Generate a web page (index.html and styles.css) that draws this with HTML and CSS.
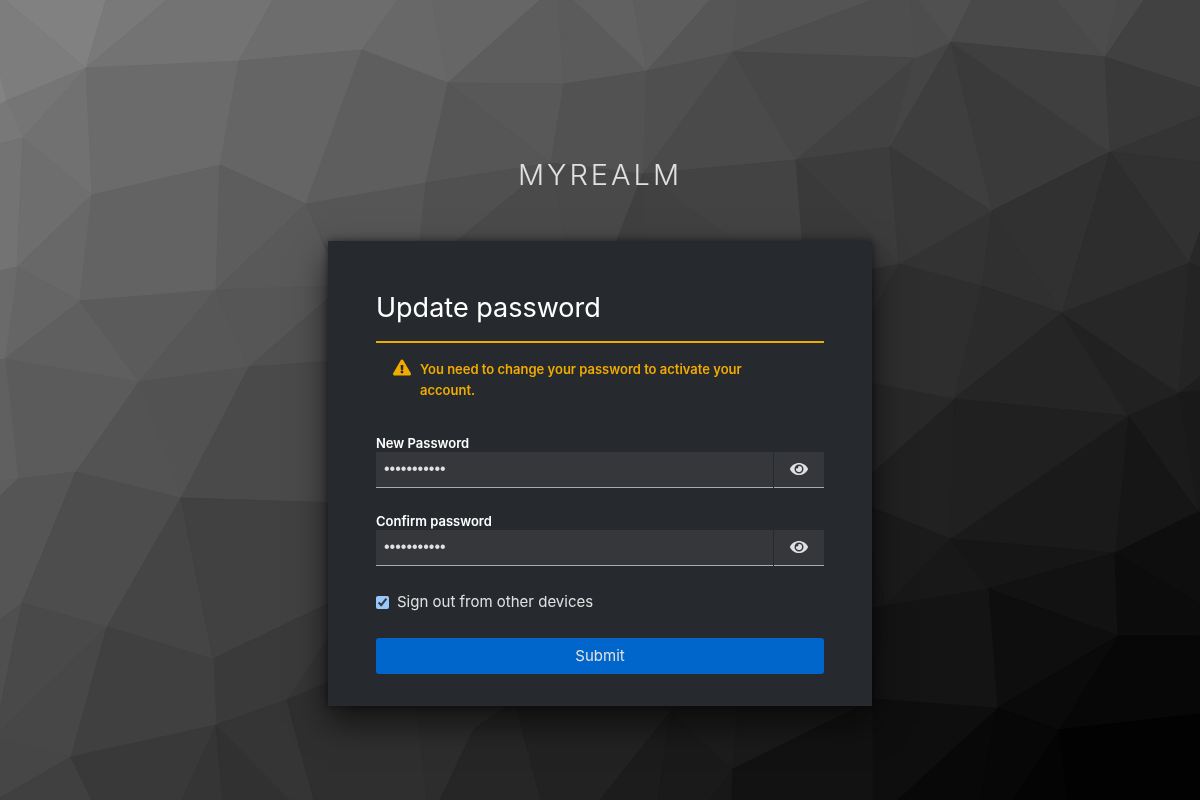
FILE: index.html
```
<!DOCTYPE html>
<html lang="en">
<head>
<meta charset="utf-8">
<meta name="viewport" content="width=device-width, initial-scale=1">
<title>Update password</title>
<link rel="stylesheet" href="styles.css">
</head>
<body>
<svg class="backdrop" viewBox="0 0 1200 800" preserveAspectRatio="xMidYMid slice" aria-hidden="true"></svg>
<div class="page">
  <header class="realm">MYREALM</header>
  <main class="card">
    <h1 class="title">Update password</h1>
    <div class="alert" role="alert">
      <svg class="alert-icon" viewBox="0 0 576 512" aria-hidden="true"><path d="M569.517 440.013C587.975 472.007 564.806 512 527.94 512H48.054c-36.937 0-59.999-40.055-41.577-71.987L246.423 23.985c18.467-32.009 64.72-31.951 83.154 0l239.94 416.028zM288 354c-25.405 0-46 20.595-46 46s20.595 46 46 46 46-20.595 46-46-20.595-46-46-46zm-43.673-165.346l7.418 136c.347 6.364 5.609 11.346 11.982 11.346h48.546c6.373 0 11.635-4.982 11.982-11.346l7.418-136c.375-6.874-5.098-12.654-11.982-12.654h-63.383c-6.884 0-12.356 5.78-11.981 12.654z"/></svg>
      <span class="alert-text">You need to change your password to activate your account.</span>
    </div>
    <form class="form">
      <div class="field">
        <label class="label" for="new">New Password</label>
        <div class="group">
          <input class="input" id="new" type="password" value="password123">
          <button class="reveal" type="button" aria-label="Show password"><svg class="eye" viewBox="0 0 576 512" aria-hidden="true"><path fill-rule="evenodd" d="M572.52 241.4C518.29 135.59 410.93 64 288 64S57.68 135.64 3.48 241.41a32.35 32.35 0 0 0 0 29.19C57.71 376.41 165.07 448 288 448s230.32-71.64 284.52-177.41a32.35 32.35 0 0 0 0-29.19zM288 400a144 144 0 1 1 144-144 143.93 143.93 0 0 1-144 144z"/><path d="M288 160a95.31 95.31 0 0 0-25.31 3.79 47.85 47.85 0 0 1-66.9 66.9A95.78 95.78 0 1 0 288 160z"/></svg></button>
        </div>
      </div>
      <div class="field">
        <label class="label" for="confirm">Confirm password</label>
        <div class="group">
          <input class="input" id="confirm" type="password" value="password123">
          <button class="reveal" type="button" aria-label="Show password"><svg class="eye" viewBox="0 0 576 512" aria-hidden="true"><path fill-rule="evenodd" d="M572.52 241.4C518.29 135.59 410.93 64 288 64S57.68 135.64 3.48 241.41a32.35 32.35 0 0 0 0 29.19C57.71 376.41 165.07 448 288 448s230.32-71.64 284.52-177.41a32.35 32.35 0 0 0 0-29.19zM288 400a144 144 0 1 1 144-144 143.93 143.93 0 0 1-144 144z"/><path d="M288 160a95.31 95.31 0 0 0-25.31 3.79 47.85 47.85 0 0 1-66.9 66.9A95.78 95.78 0 1 0 288 160z"/></svg></button>
        </div>
      </div>
      <label class="check"><input class="box" type="checkbox" checked><span>Sign out from other devices</span></label>
      <button class="submit" type="submit">Submit</button>
    </form>
  </main>
</div>
<script src="backdrop.js"></script>
</body>
</html>
```
FILE: backdrop.js
```
// Facets of the low-poly backdrop: grey level, then the corner points.
const facets = `
129 5,0 106,0 86,68
125 0,0 5,0 86,68 6,101 0,78
131 0,78 6,101 0,104
121 106,0 167,0 86,68
115 167,0 273,0 239,61 86,68
109 273,0 398,0 362,50 239,61
104 398,0 432,0 448,83 362,50
102 432,0 540,0 448,83
117 6,101 86,68 23,138
120 0,104 6,101 23,138 0,144
113 86,68 92,195 23,138
115 0,144 23,138 17,267 0,271
110 23,138 92,195 17,267
107 86,68 239,61 220,165 92,195
101 239,61 362,50 306,204 220,165
94 362,50 448,83 426,183 306,204
104 92,195 17,267 80,301
99 92,195 220,165 216,290 80,301
93 220,165 306,204 216,290
101 17,267 80,301 5,359
106 0,271 17,267 5,359 0,360
89 306,204 216,290 340,286 340,281
86 306,204 426,183 419,250 340,250 328,250
95 80,301 5,359 139,382
91 80,301 216,290 139,382
87 216,290 139,382 249,367
86 216,290 340,286 340,288 249,367
80 249,367 340,288 340,361
91 5,359 139,382 76,472 18,479
96 0,360 5,359 18,479 0,481
94 0,481 18,479 0,496
82 139,382 249,367 181,498
83 139,382 181,498 76,472
74 249,367 340,361 340,503 181,498
85 18,479 76,472 22,603 0,620 0,496
77 76,472 181,498 107,627 22,603
69 181,498 107,627 213,659
65 181,498 340,503 340,598 213,659
58 213,659 340,598 340,677 287,700 216,725
54 287,700 340,620 340,677
79 22,603 0,620 0,710
73 22,603 107,627 0,732 0,710
71 107,627 71,757 0,740 0,732
70 0,740 71,757 0,798
64 71,757 0,798 0,800 92,800
64 107,627 213,659 216,725 71,757
57 71,757 216,725 182,800 92,800
53 216,725 182,800 223,800
49 216,725 223,800 290,800
53 216,725 287,700 314,800 290,800
47 287,700 340,677 416,690 427,800 314,800
45 415,690 427,800 440,800 474,729 530,690
38 474,729 530,690 512,690 541,800 440,800
34 512,690 690,690 671,711 600,800 541,800
28 671,711 658,800 600,800
26 671,711 733,769 710,800 658,800
28 671,711 690,690 740,690 733,769
26 740,690 880,690 873,700 733,769
24 733,769 710,800 732,800
18 733,769 873,700 873,800 732,800
93 540,0 558,0 564,84 448,83
91 558,0 574,0 647,71 564,84
97 574,0 633,0 647,71
94 633,0 710,0 647,71
86 710,0 738,0 733,52 647,71
84 738,0 872,0 733,52
78 733,52 872,0 911,0 915,58
88 448,83 564,84 551,163
86 448,83 551,163 426,183
82 564,84 647,71 643,174 551,163
79 647,71 733,52 643,174
74 733,52 796,160 643,174
71 733,52 915,58 796,160
80 426,183 551,163 446,250 419,250
74 551,163 446,250 567,250
73 551,163 567,250 613,250 643,174
64 643,174 613,250 647,250
65 643,174 647,250 750,250
67 643,174 796,160 803,250 750,250
66 915,58 796,160 890,147
69 915,58 951,42 890,147
77 911,0 918,0 951,42 915,58
80 918,0 972,0 951,42
73 972,0 1057,0 1105,57 951,42
76 1057,0 1118,0 1105,57
74 1118,0 1144,0 1105,57
65 1144,0 1200,0 1200,88 1105,57
62 951,42 890,147 992,211
58 951,42 992,211 1110,152
63 951,42 1105,57 1110,152
57 1105,57 1200,88 1200,116 1110,152
52 1110,152 1200,116 1200,162
49 1110,152 1200,162 1200,232 1189,263
49 992,211 1110,152 1062,313
45 1110,152 1062,313 1189,263
51 992,211 899,264 982,286
48 992,211 982,286 1062,313
60 796,160 890,147 899,264
56 890,147 992,211 899,264
58 796,160 803,250 860,272 899,264
40 1189,263 1200,232 1200,268
50 899,264 860,272 860,335
46 899,264 860,335 860,381 954,399 982,286
43 982,286 1062,313 954,399
37 1062,313 954,399 1128,416
33 1062,313 1128,416 1179,393
39 1062,313 1189,263 1179,393
36 1189,263 1200,268 1200,377 1179,393
30 1179,393 1200,377 1200,391
25 1179,393 1200,391 1200,512 1198,512
27 1128,416 1179,393 1198,512
22 1128,416 1115,553 1198,512
26 1128,416 950,539 1115,553
32 954,399 1128,416 950,539
33 954,399 860,483 860,503 950,539
40 954,399 860,381 860,483
27 860,503 950,539 885,606
24 950,539 988,589 885,606
22 950,539 1115,553 988,589
18 988,589 1115,553 1118,636
14 1115,553 1198,512 1200,512 1200,604
12 1115,553 1200,604 1200,636 1118,636
14 988,589 1118,636 997,708
20 885,606 988,589 997,708 873,699
25 860,503 860,610 885,606
19 860,610 885,606 873,699
10 1118,636 997,708 1059,730
7 1118,636 1200,636 1200,714 1059,730
2 1059,730 1200,714 1200,800 1067,800
4 1059,730 1067,800 1012,800
7 997,708 1059,730 1012,800 980,800
8 997,708 980,800 897,800
14 873,699 997,708 897,800 873,800
`.trim().split("\n");

const svg = document.querySelector(".backdrop");
for (const facet of facets) {
  const split = facet.indexOf(" ");
  const grey = facet.slice(0, split);
  const polygon = document.createElementNS("http://www.w3.org/2000/svg", "polygon");
  polygon.setAttribute("points", facet.slice(split + 1));
  polygon.setAttribute("fill", `rgb(${grey},${grey},${grey})`);
  polygon.setAttribute("stroke", `rgb(${grey},${grey},${grey})`);
  svg.append(polygon);
}
```
FILE: styles.css
```
* { box-sizing: border-box; }
body {
  margin: 0;
  min-height: 100vh;
  background: #444;
  color: #e0e0e0;
  color-scheme: dark;
  font: 15px/22px Inter, sans-serif;
}
.backdrop {
  position: fixed;
  inset: 0;
  width: 100%;
  height: 100%;
  z-index: -1;
}
.page {
  max-width: 544px;
  margin: 0 auto;
  padding: 152px 0 48px;
}
.realm {
  margin-bottom: 44px;
  font-size: 29px;
  font-weight: 300;
  line-height: 45px;
  letter-spacing: 3px;
  text-align: center;
}
.card {
  padding: 48px 48px 32px;
  background: #26292d;
  box-shadow: 0 16px 32px rgba(3, 3, 3, .64), 0 0 8px rgba(3, 3, 3, .5);
}
.title {
  margin: 0 0 15px;
  color: #fff;
  font-size: 27px;
  font-weight: 400;
  line-height: 37px;
}
.alert {
  display: flex;
  gap: 9px;
  padding: 16px 32px 0 17px;
  border-top: 2px solid #f0ab00;
  color: #f0ab00;
  font-size: 13px;
  font-weight: 600;
  line-height: 21px;
}
.alert-icon {
  flex: none;
  width: 18px;
  height: 17px;
  fill: currentColor;
}
.form { margin-top: 33px; }
.field { margin-bottom: 24px; }
.label {
  display: block;
  height: 18px;
  color: #fff;
  font-size: 13px;
  font-weight: 600;
  line-height: 18px;
}
.group { display: flex; gap: 1px; }
.input, .reveal {
  height: 36px;
  border: 0;
  border-bottom: 1px solid #aaabac;
  border-radius: 0;
  background: #36373a;
  color: #e0e0e0;
}
.input {
  flex: 1;
  min-width: 0;
  padding: 0 8px 2px;
  font: 16px/24px "Liberation Sans", sans-serif;
}
.reveal {
  display: flex;
  align-items: center;
  justify-content: center;
  width: 50px;
  padding: 0 0 2px;
}
.eye { width: 18px; height: 16px; fill: currentColor; }
.check { display: flex; align-items: center; gap: 8px; height: 24px; }
.box { width: 13px; height: 13px; margin: 0; }
.submit {
  width: 100%;
  height: 36px;
  margin-top: 24px;
  border: 0;
  border-radius: 3px;
  background: #06c;
  color: #e0e0e0;
  font: 15px/24px Inter, sans-serif;
}
```
